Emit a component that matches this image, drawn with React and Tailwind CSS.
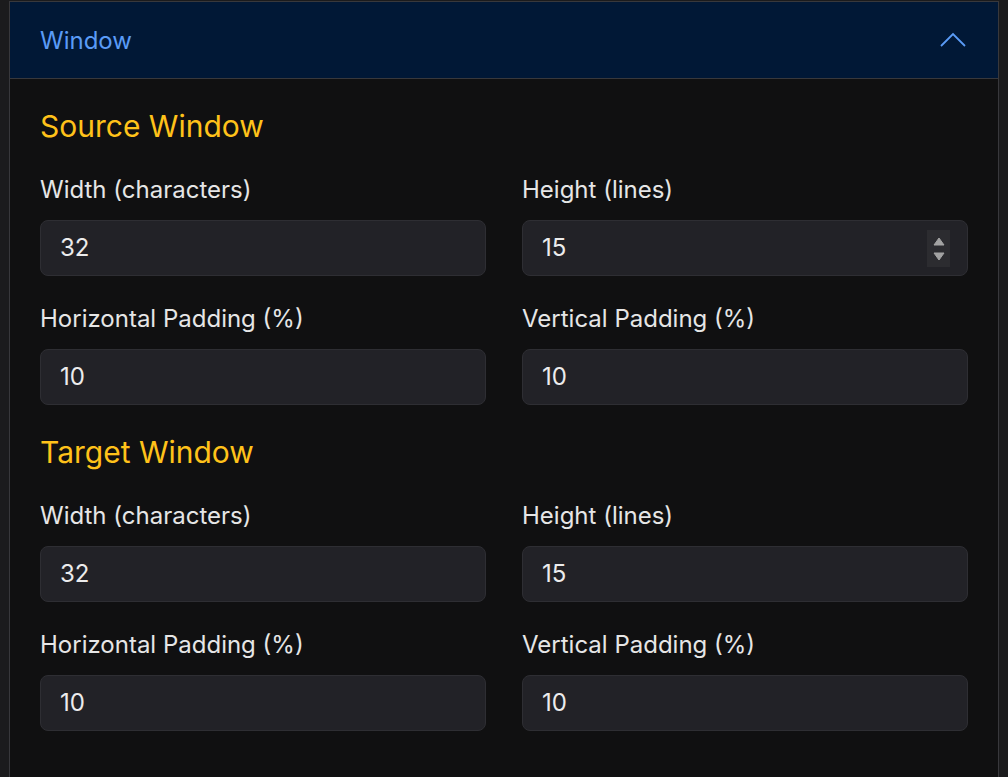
import React from "react";

const font = { fontFamily: "Inter, 'Noto Sans', sans-serif" };

const Field = ({ label, value, spinner }) => (
  <div>
    <label className="block text-[24px] leading-[32px] text-[#e6e6e6]">{label}</label>
    <div className="relative mt-[14px] h-[56px] rounded-[8px] border border-[#2e2e33] bg-[#222227] flex items-center pl-[19px]">
      <span className="text-[24px] text-[#ececec]">{value}</span>
      {spinner && (
        <div className="absolute right-[17px] top-[9px] w-[23px] h-[37px] bg-[#2c2c30] flex flex-col items-center justify-center gap-[6px]">
          <svg width="12" height="9" viewBox="0 0 12 9">
            <path d="M6 1 L11 8 L1 8 Z" fill="#a3a3a3" stroke="#a3a3a3" strokeLinejoin="round" />
          </svg>
          <svg width="12" height="9" viewBox="0 0 12 9">
            <path d="M1 1 L11 1 L6 8 Z" fill="#a3a3a3" stroke="#a3a3a3" strokeLinejoin="round" />
          </svg>
        </div>
      )}
    </div>
  </div>
);

const Section = ({ title, first, heightSpinner }) => (
  <div className={first ? "" : "mt-[29px]"}>
    <h3 className="text-[30px] leading-[36px] text-[#ffc21a]">{title}</h3>
    <div className="mt-[30px] grid grid-cols-2 gap-x-[36px] gap-y-[27px]">
      <Field label="Width (characters)" value="32" />
      <Field label="Height (lines)" value="15" spinner={heightSpinner} />
      <Field label="Horizontal Padding (%)" value="10" />
      <Field label="Vertical Padding (%)" value="10" />
    </div>
  </div>
);

export default function App() {
  return (
    <div className="min-h-[777px] bg-[#1b1b1d] px-[9px] pt-[1px]" style={font}>
      <div className="border border-[#38383c] border-b-0 bg-[#101011] min-h-[776px]">
        {/* Header */}
        <div className="h-[77px] bg-[#011836] border-b border-[#38383c] flex items-center justify-between pl-[30px] pr-[30px]">
          <span className="text-[24px] text-[#5a9bf6] pt-[2px]">Window</span>
          <svg width="28" height="16" viewBox="0 0 28 16" className="mr-[1px]">
            <polyline points="2,14 14,2 26,14" fill="none" stroke="#5a9bf6" strokeWidth="1.8" />
          </svg>
        </div>
        {/* Body */}
        <div className="px-[30px] pt-[29px] pb-[30px]">
          <Section title="Source Window" first heightSpinner />
          <Section title="Target Window" />
        </div>
      </div>
    </div>
  );
}
